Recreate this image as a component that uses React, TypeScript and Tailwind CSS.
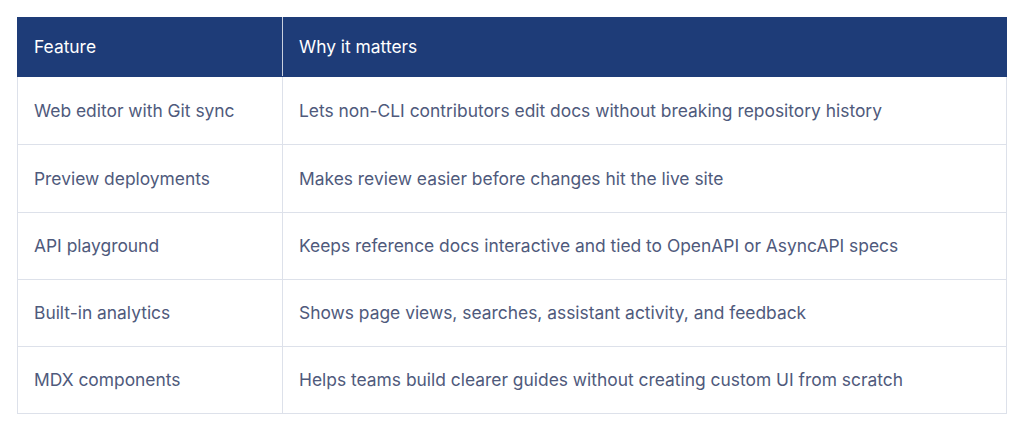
const rows: [string, string][] = [
  ["Web editor with Git sync", "Lets non-CLI contributors edit docs without breaking repository history"],
  ["Preview deployments", "Makes review easier before changes hit the live site"],
  ["API playground", "Keeps reference docs interactive and tied to OpenAPI or AsyncAPI specs"],
  ["Built-in analytics", "Shows page views, searches, assistant activity, and feedback"],
  ["MDX components", "Helps teams build clearer guides without creating custom UI from scratch"],
];

export default function App() {
  return (
    <div className="w-[1024px] h-[432px] bg-white pt-[17px] pl-[17px] font-['Inter',sans-serif]">
      <table className="w-[990px] border-collapse text-[17.4px]">
        <thead>
          <tr className="bg-[#1e3c78] text-white h-[59px]">
            <th className="w-[265px] border border-[#1e3c78] border-r-[#c9d0de] text-left font-normal pl-[16px]">Feature</th>
            <th className="border border-[#1e3c78] text-left font-normal pl-[16px]">Why it matters</th>
          </tr>
        </thead>
        <tbody className="text-[#4f5a7c]">
          {rows.map(([a, b], i) => (
            <tr key={a} className={i < 2 ? "h-[68px]" : "h-[67px]"}>
              <td className="border border-[#dde1ea] pl-[16px] pt-[1px]">{a}</td>
              <td className="border border-[#dde1ea] pl-[16px] pt-[1px]">{b}</td>
            </tr>
          ))}
        </tbody>
      </table>
    </div>
  );
}
